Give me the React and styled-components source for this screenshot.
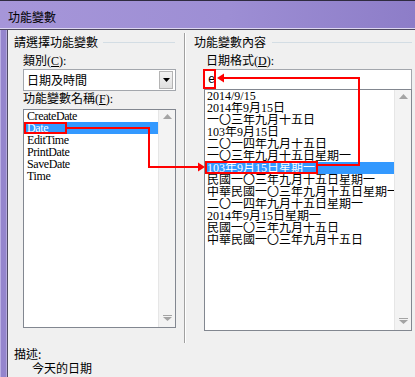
import styled, { createGlobalStyle, css } from "styled-components";

const GlobalStyle = createGlobalStyle`
  html, body {
    margin: 0;
    padding: 0;
    background: #f0f0f0;
  }
  body {
    font-family: "Noto Sans CJK TC", sans-serif;
  }
`;

const Window = styled.div`
  position: relative;
  width: 415px;
  height: 377px;
  display: flex;
  flex-direction: column;
  overflow: hidden;
  font-size: 12px;
  color: #000;
`;

const TitleBar = styled.div`
  box-sizing: border-box;
  flex: none;
  height: 30px;
  padding: 2px 0 0 8px;
  display: flex;
  align-items: center;
  border-top: 1px solid #2f2b40;
  background: linear-gradient(90deg, #a696d9 0%, #9d8ed4 55%, #8d7dc8 100%);
  box-shadow: inset 0 -1px 0 #4c475e, inset 0 -2px 0 #ddd7f0;
  font-family: "Noto Sans CJK TC", sans-serif;
  font-size: 12px;
  line-height: 12px;
`;

const Body = styled.div`
  flex: 1;
  display: flex;
  min-height: 0;
`;

const Frame = styled.div`
  flex: none;
  width: 7px;
  background: #9485cd;
  border-right: 1px solid #4f4a63;
  box-shadow: inset 1px 0 0 #b9aee3, inset -1px 0 0 #b3a8dd;
`;

const Content = styled.div`
  flex: 1;
  display: flex;
  flex-direction: column;
  padding-top: 3px;
  background: #f0f0f0;
`;

const Panes = styled.div`
  display: flex;
  height: 310px;
`;

const Pane = styled.div`
  flex: none;
  box-sizing: border-box;
  width: ${(p) => p.$w}px;
  padding-left: ${(p) => p.$pad}px;
`;

const Separator = styled.div`
  flex: none;
  width: 1px;
  background: #a0a0a0;
  border-right: 1px solid #fff;
`;

const SectionHeader = styled.div`
  display: flex;
  align-items: center;
  height: 12px;
  line-height: 12px;
  margin-top: 3px;
  margin-right: ${(p) => p.$trail}px;
  white-space: nowrap;

  &::after {
    content: "";
    flex: 1;
    height: 1px;
    margin-left: ${(p) => p.$gap}px;
    background: #d3dde4;
  }
`;

const Field = styled.div`
  padding-left: ${(p) => p.$indent}px;
`;

const Label = styled.div`
  height: 12px;
  line-height: 12px;
  margin: ${(p) => p.$top}px 0 ${(p) => p.$bottom}px;
  padding-left: ${(p) => p.$pad || 0}px;
  font-family: "Liberation Serif", "Noto Sans CJK TC", serif;
  white-space: nowrap;
`;

const Key = styled.span`
  text-decoration: underline;
`;

const Combo = styled.div`
  box-sizing: border-box;
  width: 153px;
  height: 22px;
  display: flex;
  align-items: center;
  justify-content: space-between;
  padding: 0 2px 0 3px;
  background: #fff;
  border: 1px solid #a3a7ad;
  line-height: 12px;
`;

const DropButton = styled.div`
  box-sizing: border-box;
  width: 14px;
  height: 18px;
  display: flex;
  align-items: center;
  justify-content: center;
  border: 1px solid #b4b4b4;
  background: linear-gradient(#f4f4f4, #e0e0e0);
`;

const TextInput = styled.div`
  box-sizing: border-box;
  width: 208px;
  height: 20px;
  display: flex;
  align-items: center;
  padding-left: 3px;
  background: #fff;
  border: 1px solid #a3a7ad;
  border-bottom: none;
  font-family: "Liberation Mono", monospace;
  font-size: 12px;
`;

const ListBox = styled.div`
  box-sizing: border-box;
  width: ${(p) => p.$w}px;
  height: ${(p) => p.$h}px;
  display: flex;
  background: #fff;
  border: 1px solid #828790;
`;

const Items = styled.div`
  flex: 1;
  min-width: 0;
  overflow: hidden;
`;

const Item = styled.div`
  height: 12px;
  line-height: 12px;
  padding-left: ${(p) => p.$pad}px;
  white-space: nowrap;
  overflow: hidden;
  font-family: "Liberation Serif", "Noto Sans CJK TC", serif;
  font-size: 12px;
  letter-spacing: ${(p) => p.$tight || 0}px;

  ${(p) =>
    p.$selected &&
    css`
      background: #3399ff;
      color: #fff;
    `}
`;

const ScrollBar = styled.div`
  flex: none;
  width: 17px;
  display: flex;
  flex-direction: column;
  justify-content: space-between;
  background: #f3f3f3;
  border-left: 1px solid #e6e6e6;
  box-sizing: border-box;
`;

const ScrollButton = styled.div`
  height: 13px;
  display: flex;
  align-items: center;
  justify-content: center;
  margin-bottom: ${(p) => (p.$down ? 3 : 0)}px;
`;

const Description = styled.div`
  padding: 4px 0 0 6px;
  line-height: 14px;
  font-family: "Noto Sans CJK TC", sans-serif;
`;

const DescText = styled.div`
  padding-left: 18px;
`;

const Annotations = styled.svg`
  position: absolute;
  left: 0;
  top: 0;
  pointer-events: none;
`;

const ArrowUp = () => (
  <svg width="9" height="5" viewBox="0 0 9 5">
    <path d="M4.5 0 L9 5 L0 5 Z" fill="#a4a4a4" />
  </svg>
);

const ArrowDown = () => (
  <svg width="9" height="6" viewBox="0 0 9 6">
    <rect x="0" y="0" width="9" height="1" fill="#a4a4a4" />
    <path d="M0 2 L9 2 L4.5 6 Z" fill="#a4a4a4" />
  </svg>
);

const Scroll = () => (
  <ScrollBar>
    <ScrollButton>
      <ArrowUp />
    </ScrollButton>
    <ScrollButton $down>
      <ArrowDown />
    </ScrollButton>
  </ScrollBar>
);

const names = ["CreateDate", "Date", "EditTime", "PrintDate", "SaveDate", "Time"];

const formats = [
  "2014/9/15",
  "2014年9月15日",
  "一〇三年九月十五日",
  "103年9月15日",
  "二〇一四年九月十五日",
  "一〇三年九月十五日星期一",
  "103年9月15日星期一",
  "民國一〇三年九月十五日星期一",
  "中華民國一〇三年九月十五日星期一",
  "二〇一四年九月十五日星期一",
  "2014年9月15日星期一",
  "民國一〇三年九月十五日",
  "中華民國一〇三年九月十五日",
];

const App = () => {
  return (
    <Window>
      <GlobalStyle />
      <TitleBar>功能變數</TitleBar>
      <Body>
        <Frame />
        <Content>
          <Panes>
            <Pane $w={176} $pad={6}>
              <SectionHeader $gap={5} $trail={9}>請選擇功能變數</SectionHeader>
              <Field $indent={9}>
                <Label $top={7} $bottom={2}>
                  類別(<Key>C</Key>):
                </Label>
                <Combo>
                  <span>日期及時間</span>
                  <DropButton>
                    <svg width="7" height="4" viewBox="0 0 7 4">
                      <path d="M0 0 L7 0 L3.5 4 Z" fill="#000" />
                    </svg>
                  </DropButton>
                </Combo>
                <Label $top={2} $bottom={4}>
                  功能變數名稱(<Key>F</Key>):
                </Label>
                <ListBox $w={153} $h={219}>
                  <Items>
                    {names.map((n) => (
                      <Item key={n} $pad={3} $tight={-0.4} $selected={n === "Date"}>
                        {n}
                      </Item>
                    ))}
                  </Items>
                  <Scroll />
                </ListBox>
              </Field>
            </Pane>
            <Separator />
            <Pane $w={229} $pad={8}>
              <SectionHeader $gap={6} $trail={3}>功能變數內容</SectionHeader>
              <Field $indent={10}>
                <Label $top={7} $bottom={2} $pad={2}>
                  日期格式(<Key>D</Key>):
                </Label>
                <TextInput>e</TextInput>
                <ListBox $w={208} $h={242}>
                  <Items>
                    {formats.map((f, i) => (
                      <Item key={f} $pad={2} $selected={i === 6}>
                        {f}
                      </Item>
                    ))}
                  </Items>
                  <Scroll />
                </ListBox>
              </Field>
            </Pane>
          </Panes>
          <Description>
            <div>描述:</div>
            <DescText>今天的日期</DescText>
          </Description>
        </Content>
      </Body>
      <Annotations width="415" height="377" viewBox="0 0 415 377">
        <g fill="none" stroke="#ff0000" strokeWidth="2">
          <rect x="25" y="123" width="41" height="10" />
          <rect x="204" y="70" width="11" height="18" />
          <rect x="206" y="162" width="111" height="11" />
          <polyline points="67,128 149,128 149,167 199,167" />
          <polyline points="318,165 359,165 359,78 223,78" />
        </g>
        <g fill="#ff0000">
          <polygon points="205,167 198,162.5 198,171.5" />
          <polygon points="217,78 224,73.5 224,82.5" />
        </g>
      </Annotations>
    </Window>
  );
};

export default App;
